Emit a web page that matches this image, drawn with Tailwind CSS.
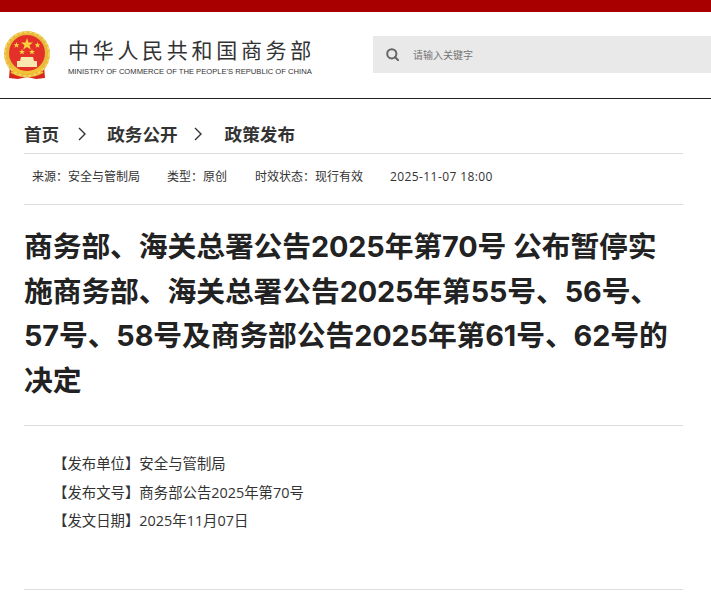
<!DOCTYPE html>
<html lang="zh-CN">
<head>
    <meta charset="UTF-8">
    <title>商务部、海关总署公告2025年第70号</title>
    <script src="https://cdn.jsdelivr.net/npm/@tailwindcss/browser@4"></script>
</head>
<body class="bg-white text-[#222] font-['Open_Sans','Noto_Sans_CJK_SC',sans-serif] overflow-hidden">
    <div class="h-3 bg-[#a80000]"></div>

    <!-- Header -->
    <header class="h-[87px] flex items-start border-b border-[#222]">
        <svg class="w-[48px] h-[50px] ml-[3px] mt-[18px] shrink-0" viewBox="0 0 48 50">
            <path d="M7 36 L6 48 L15 49 L24 47 L33 49 L42 48 L41 36 Z" fill="#d9261c"/>
            <path d="M8 42 Q24 51 40 42" fill="none" stroke="#f3c335" stroke-width="2"/>
            <circle cx="24" cy="24" r="23" fill="#e8b93a"/>
            <circle cx="24" cy="24" r="22" fill="none" stroke="#f5d86a" stroke-width="1.5" stroke-dasharray="3 2"/>
            <circle cx="24" cy="23" r="18" fill="#e3312a"/>
            <polygon points="24,8 25.5,12.5 30,12.5 26.5,15.2 27.8,19.5 24,17 20.2,19.5 21.5,15.2 18,12.5 22.5,12.5" fill="#f7d23e"/>
            <polygon points="13.5,12 14.3,14.2 16.5,14.2 14.8,15.6 15.4,17.7 13.5,16.5 11.6,17.7 12.2,15.6 10.5,14.2 12.7,14.2" fill="#f7d23e"/>
            <polygon points="34.5,12 35.3,14.2 37.5,14.2 35.8,15.6 36.4,17.7 34.5,16.5 32.6,17.7 33.2,15.6 31.5,14.2 33.7,14.2" fill="#f7d23e"/>
            <polygon points="19,19 19.8,21 22,21 20.3,22.3 20.9,24.3 19,23.2 17.1,24.3 17.7,22.3 16,21 18.2,21" fill="#f7d23e"/>
            <polygon points="29,19 29.8,21 32,21 30.3,22.3 30.9,24.3 29,23.2 27.1,24.3 27.7,22.3 26,21 28.2,21" fill="#f7d23e"/>
            <path d="M18 27 H30 L31 31 H34 V37 H14 V31 H17 Z" fill="#f8e7b0"/>
            <path d="M8 36 Q24 46 40 36 L39 40 Q24 48 9 40 Z" fill="#f3c335"/>
        </svg>
        <div class="ml-[17px] mt-[23px] w-[247px] shrink-0">
            <div class="text-[21px] leading-[28px] tracking-[3.7px] text-[#333] whitespace-nowrap font-['Noto_Sans_CJK_SC',sans-serif]">中华人民共和国商务部</div>
            <div class="text-[7.62px] leading-[12px] mt-[3px] text-[#333] whitespace-nowrap font-['Liberation_Sans',sans-serif]">MINISTRY OF COMMERCE OF THE PEOPLE'S REPUBLIC OF CHINA</div>
        </div>
        <div class="ml-[58px] mt-[24px] flex-1 h-[37px] bg-[#e9e9e9] flex items-center pl-[13px]">
            <svg class="w-[13px] h-[13px]" viewBox="0 0 13 13" fill="none" stroke="#666" stroke-width="2">
                <circle cx="5.8" cy="5.8" r="4.6"/>
                <path d="M9 9 L12.2 12.2" stroke-linecap="round"/>
            </svg>
            <span class="ml-[14px] pt-[2px] text-[10px] text-[#757575]">请输入关键字</span>
        </div>
    </header>

    <main class="pl-6">
        <div class="w-[659px]">
            <!-- Breadcrumb -->
            <nav class="h-[55px] pt-[21px] border-b border-[#ddd] flex items-start text-[17.6px] leading-[28px] font-bold text-[#333]">
                <span>首页</span>
                <svg class="w-[8px] h-[14px] ml-[19px] mt-[7px]" viewBox="0 0 8 14" fill="none" stroke="#333" stroke-width="1.4"><path d="M1 1 L7 7 L1 13"/></svg>
                <span class="ml-[21px]">政务公开</span>
                <svg class="w-[8px] h-[14px] ml-[16px] mt-[7px]" viewBox="0 0 8 14" fill="none" stroke="#333" stroke-width="1.4"><path d="M1 1 L7 7 L1 13"/></svg>
                <span class="ml-[23px]">政策发布</span>
            </nav>

            <!-- Meta -->
            <div class="h-[51px] border-b border-[#ddd] flex items-center pl-2 pb-[4px] text-[12px] text-[#333]">
                <span>来源：安全与管制局</span>
                <span class="ml-[27px]">类型：原创</span>
                <span class="ml-[28px]">时效状态：现行有效</span>
                <span class="ml-[27px] tracking-[0.4px]">2025-11-07 18:00</span>
            </div>

            <!-- Title -->
            <h1 class="pt-[20px] pb-[22px] border-b border-[#ddd] text-[28.8px] leading-[44.5px] tracking-[-0.1px] font-bold text-[#222] font-['Inter','Noto_Sans_CJK_SC',sans-serif]">商务部、海关总署公告2025年第70号 公布暂停实施商务部、海关总署公告2025年第55号、56号、57号、58号及商务部公告2025年第61号、62号的决定</h1>

            <!-- Info -->
            <div class="h-[164px] border-b border-[#ddd] pt-[24px] pl-[29px] text-[14.4px] leading-[28.5px] text-[#333]">
                <p>【发布单位】安全与管制局</p>
                <p>【发布文号】商务部公告2025年第70号</p>
                <p>【发文日期】2025年11月07日</p>
            </div>
        </div>
    </main>
</body>
</html>
